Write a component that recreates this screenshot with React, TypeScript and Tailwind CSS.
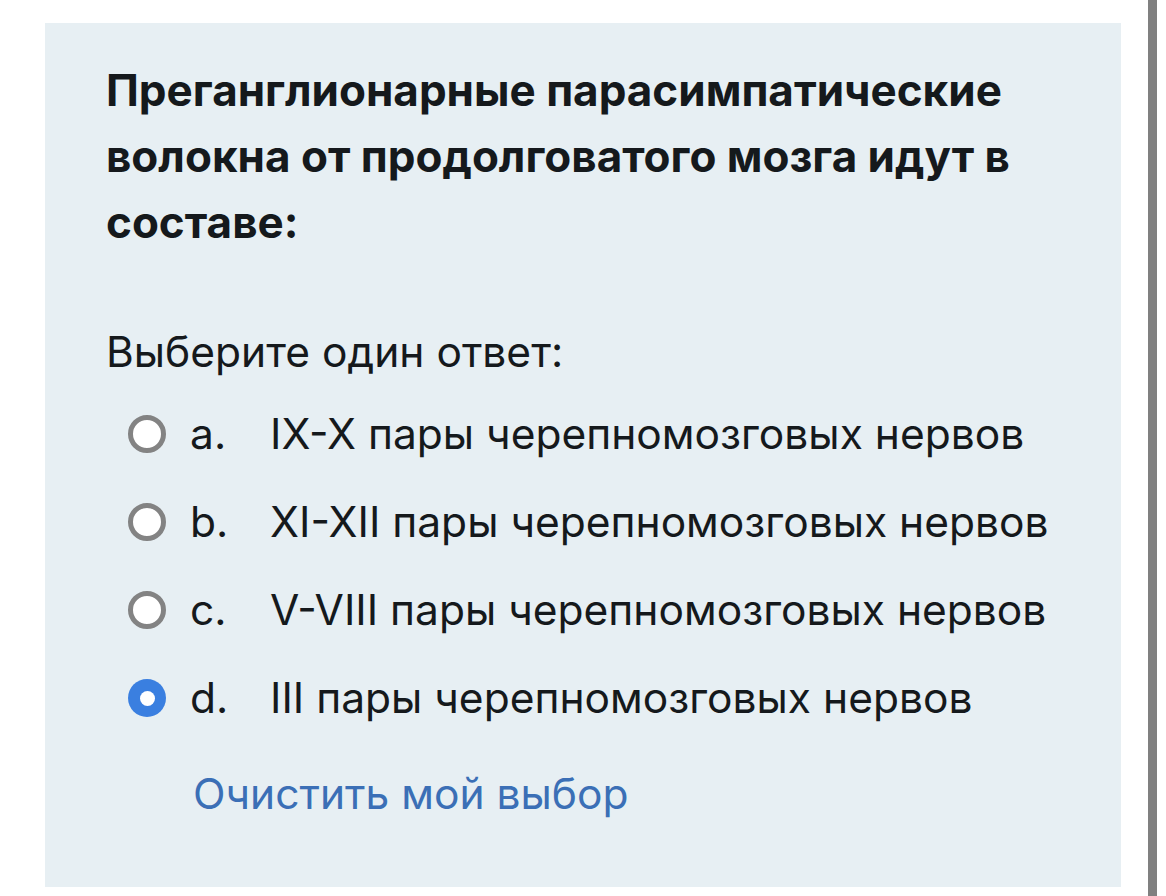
const OPTIONS = [
  { key: "a", text: "IX-X пары черепномозговых нервов", checked: false },
  { key: "b", text: "XI-XII пары черепномозговых нервов", checked: false },
  { key: "c", text: "V-VIII пары черепномозговых нервов", checked: false },
  { key: "d", text: "III пары черепномозговых нервов", checked: true }
];

export default function App() {
  return (
    <div className="flex h-[896px] w-[1166px] bg-white font-['Inter',sans-serif] text-[#15191c]">
      <div className="ml-[45px] mt-[23px] h-[864px] w-[1076px] bg-[#e7eff3] pl-[61px] pt-[34px]">
        <h2 className="text-[44px] font-bold leading-[66px]">
          Преганглионарные парасимпатические
          <br />
          волокна от продолговатого мозга идут в
          <br />
          составе:
        </h2>

        <div className="mt-[67px] text-[42.5px] leading-[60px]">Выберите один ответ:</div>

        <div className="mt-[8px] pl-[22px]">
          {OPTIONS.map((opt) => (
            <div key={opt.key} className="flex h-[88px] items-center text-[42.5px]">
              <Radio checked={opt.checked} />
              <span className="ml-[24px] w-[80px]">{opt.key}.</span>
              <span>{opt.text}</span>
            </div>
          ))}
        </div>

        <div className="ml-[87px] mt-[22px] text-[42.5px] leading-[60px] text-[#3b6fb6]">Очистить мой выбор</div>
      </div>
      <div className="ml-[27px] h-full w-[9px] bg-[#808080]" />
    </div>
  );
}

function Radio({ checked }: { checked: boolean }) {
  if (checked) {
    return (
      <span className="flex h-[38px] w-[38px] items-center justify-center rounded-full bg-[#3a7fe0]">
        <span className="h-[15px] w-[15px] rounded-full bg-white" />
      </span>
    );
  }
  return <span className="h-[38px] w-[38px] rounded-full border-[5px] border-[#838383] bg-white" />;
}
